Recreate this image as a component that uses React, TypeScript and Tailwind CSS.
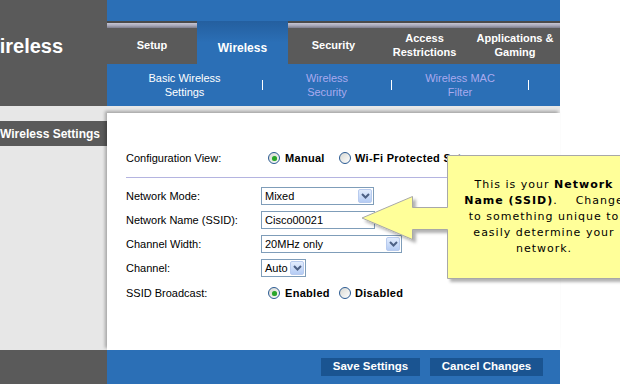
import React from "react";

function Chevron() {
  return (
    <svg width="9" height="6" viewBox="0 0 9 6">
      <polyline points="1,1 4.5,4.5 8,1" fill="none" stroke="#4d6185" strokeWidth="2" />
    </svg>
  );
}

function Select({ value, w }: { value: string; w: string }) {
  return (
    <div className={`${w} h-[18px] border border-[#7f9db9] bg-white flex items-center justify-between pl-[3px] pr-px`}>
      <span className="text-[11px] leading-none text-black">{value}</span>
      <span className="w-[14px] h-[14px] rounded-[2px] border border-[#b8cbee] bg-gradient-to-b from-[#e3edfd] to-[#b5ccf4] flex items-center justify-center">
        <Chevron />
      </span>
    </div>
  );
}

function Radio({ checked }: { checked?: boolean }) {
  return (
    <span className="inline-flex w-[12px] h-[12px] rounded-full border border-[#2a5a92] bg-gradient-to-br from-[#d8d8d2] to-white items-center justify-center shrink-0">
      {checked && <span className="w-[5px] h-[5px] rounded-full bg-[#2aa52a] shadow-[0_0_1px_#7fd27f]" />}
    </span>
  );
}

function RadioPair({ a, b, first }: { a: string; b: string; first: boolean }) {
  return (
    <div className="flex items-center pl-[7px]">
      <div className="w-[71px] flex items-center">
        <Radio checked={first} />
        <span className="ml-[5px] text-[11px] font-bold tracking-[0.3px] text-black whitespace-nowrap">{a}</span>
      </div>
      <div className="flex items-center">
        <Radio checked={!first} />
        <span className="ml-[4px] text-[11px] font-bold tracking-[0.3px] text-black whitespace-nowrap">{b}</span>
      </div>
    </div>
  );
}

function Row({ label, children }: { label: string; children: React.ReactNode }) {
  return (
    <div className="h-[24px] flex items-center">
      <div className="w-[135px] text-[11px] text-black whitespace-nowrap">{label}</div>
      {children}
    </div>
  );
}

function Tab({ lines, w, active }: { lines: string[]; w: string; active?: boolean }) {
  if (active) {
    return (
      <div className={`${w} h-[43px] bg-gradient-to-b from-[#245f9f] via-[#2b6fb6] to-[#2b6fb6] flex items-center justify-center pt-[10px]`}>
        <span className="text-[12px] font-bold text-white leading-[14px]">{lines[0]}</span>
      </div>
    );
  }
  return (
    <div className={`${w} h-[43px] bg-[#5a5a5a] flex flex-col`}>
      <div className="h-[2px] bg-[#4a4a4a]" />
      <div className="h-[5px] bg-gradient-to-b from-[#c6c6d6] via-[#a8a8b8] to-[#7c7c8c]" />
      <div className="flex-1 flex flex-col items-center justify-center text-center pb-[2px]">
        {lines.map((l) => (
          <span key={l} className="text-[11px] font-bold text-white leading-[14px] whitespace-nowrap">
            {l}
          </span>
        ))}
      </div>
    </div>
  );
}

function Sep() {
  return <span className="w-px h-[10px] bg-white shrink-0" />;
}

export default function App() {
  return (
    <div className="relative w-[620px] h-[384px] overflow-hidden bg-white font-['Liberation_Sans',Arial,sans-serif]">
      <div className="w-[560px] flex flex-col">
        {/* Header */}
        <div className="flex h-[106px]">
          <div className="w-[107px] bg-[#5a5a5a] overflow-hidden pt-[34px]">
            <div className="ml-[-19px] text-[20px] leading-[24px] font-bold text-white whitespace-nowrap">Wireless</div>
          </div>
          <div className="flex-1 flex flex-col">
            <div className="h-[21px] bg-[#2b6fb6]" />
            <div className="h-[43px] flex">
              <Tab lines={["Setup"]} w="w-[90px]" />
              <Tab lines={["Wireless"]} w="w-[91px]" active />
              <Tab lines={["Security"]} w="w-[91px]" />
              <Tab lines={["Access", "Restrictions"]} w="w-[91px]" />
              <Tab lines={["Applications &", "Gaming"]} w="w-[90px]" />
            </div>
            <div className="h-[42px] bg-[#2b6fb6] flex items-center text-[11px] leading-[14px] text-center">
              <div className="w-[155px] text-white">
                Basic Wireless
                <br />
                Settings
              </div>
              <Sep />
              <div className="w-[128px] text-[#aaaaee]">
                Wireless
                <br />
                Security
              </div>
              <Sep />
              <div className="w-[136px] text-[#aaaaee]">
                Wireless MAC
                <br />
                Filter
              </div>
              <Sep />
            </div>
          </div>
        </div>

        {/* Middle */}
        <div className="flex h-[244px]">
          <div className="w-[107px] bg-[#e7e7e7] pt-[15px]">
            <div className="h-[25px] bg-[#5a5a5a] flex items-center justify-end pr-[7px]">
              <span className="text-[12px] font-bold text-white whitespace-nowrap">Wireless Settings</span>
            </div>
          </div>
          <div className="flex-1 bg-[#e7e7e7] pt-[7px]">
            <div className="h-full bg-white shadow-[-2px_-2px_3px_rgba(0,0,0,0.28)] pl-[19px] pr-[19px] pt-[33px]">
              <Row label="Configuration View:">
                <RadioPair a="Manual" b="Wi-Fi Protected Setup" first />
              </Row>
              <div className="mt-[7px] h-px bg-[#b4b4e0]" />
              <div className="mt-[6px]">
                <Row label="Network Mode:">
                  <Select value="Mixed" w="w-[113px]" />
                </Row>
                <Row label="Network Name (SSID):">
                  <div className="w-[114px] h-[18px] border border-[#7f9db9] bg-white flex items-center pl-[3px] text-[11px] text-black">
                    Cisco00021
                  </div>
                </Row>
                <Row label="Channel Width:">
                  <Select value="20MHz only" w="w-[141px]" />
                </Row>
                <Row label="Channel:">
                  <Select value="Auto" w="w-[45px]" />
                </Row>
                <div className="pt-px">
                  <Row label="SSID Broadcast:">
                    <RadioPair a="Enabled" b="Disabled" first />
                  </Row>
                </div>
              </div>
            </div>
          </div>
        </div>

        {/* Footer */}
        <div className="flex h-[34px]">
          <div className="w-[107px] bg-[#5a5a5a]" />
          <div className="flex-1 bg-[#2b6fb6] flex items-start pt-[8px] pl-[214px] gap-[10px]">
            <div className="w-[99px] h-[18px] bg-[#1a5491] flex items-center justify-center text-[11.5px] font-bold text-white whitespace-nowrap">
              Save Settings
            </div>
            <div className="w-[113px] h-[18px] bg-[#1a5491] flex items-center justify-center text-[11.5px] font-bold text-white whitespace-nowrap">
              Cancel Changes
            </div>
          </div>
        </div>
      </div>

      {/* Callout */}
      <svg className="absolute left-[355px] top-[150px]" width="275" height="140" viewBox="0 0 275 140">
        <defs>
          <filter id="sh" x="-10%" y="-10%" width="130%" height="130%">
            <feDropShadow dx="3" dy="3" stdDeviation="1.5" floodColor="#000" floodOpacity="0.3" />
          </filter>
        </defs>
        <path
          d="M92.5 5.5 H300 V128.5 H92.5 V79.5 H57.5 V89.5 L7 68 L57.5 46.5 V57.5 H92.5 Z"
          fill="#ffff99"
          stroke="#a8a8a8"
          strokeWidth="1"
          filter="url(#sh)"
        />
      </svg>
      <div className="absolute left-[447px] top-[177px] w-[194px] text-center font-['DejaVu_Sans',Verdana,sans-serif] text-[11px] leading-[16px] tracking-[1px] text-black whitespace-nowrap">
        This is your <b>Network</b>
        <br />
        <b>Name (SSID)</b>.{"\u00a0\u00a0\u00a0 "}Change
        <br />
        to something unique to
        <br />
        easily determine your
        <br />
        network.
      </div>
    </div>
  );
}
